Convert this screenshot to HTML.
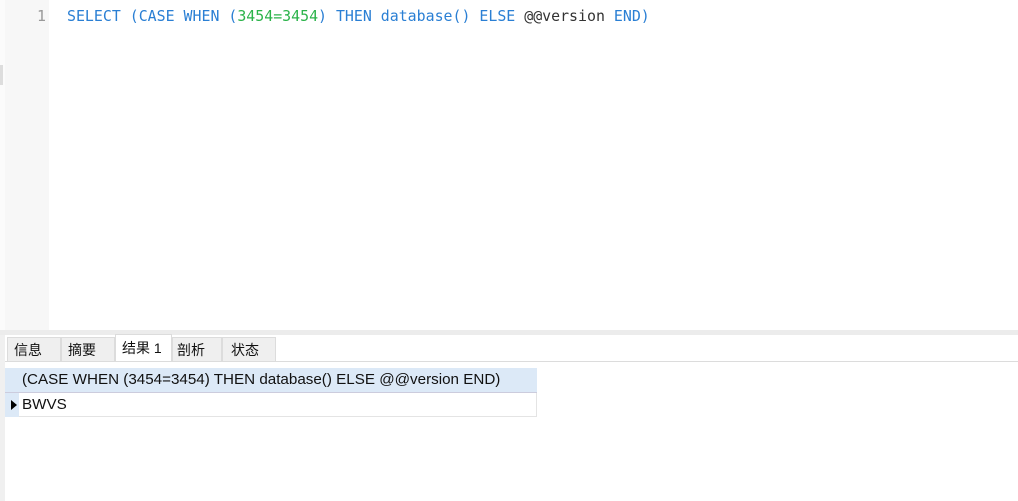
<!DOCTYPE html>
<html><head><meta charset="utf-8"><style>
body{margin:0;width:1018px;height:501px;background:#fff;position:relative;overflow:hidden;font-family:"Liberation Sans","Noto Sans CJK SC",sans-serif}
.a{position:absolute}
.code{font-family:"DejaVu Sans Mono","Liberation Mono",monospace;font-size:14.9px;color:#2a7fd4;white-space:pre}
.tab{position:absolute;top:337px;height:24px;background:#efefef;border:1px solid #dcdcdc;border-bottom:none;font-size:14px;line-height:24px;color:#111;box-sizing:border-box;padding-left:6px}
</style></head><body>
<div class="a" style="left:0;top:0;width:5px;height:330px;background:#fbfbfb"></div>
<div class="a" style="left:0;top:65px;width:3px;height:20px;background:#ddd"></div>
<div class="a" style="left:5px;top:0;width:44px;height:330px;background:#f7f7f7"></div>
<div class="a code" style="left:37px;top:7px;color:#999">1</div>
<div class="a code" style="left:67px;top:7px">SELECT (CASE WHEN (<span style="color:#2bb34a">3454=3454</span>) THEN database() ELSE <span style="color:#333">@@version</span> END)</div>
<div class="a" style="left:0;top:330px;width:1018px;height:5px;background:#ececec"></div>
<div class="a" style="left:0;top:335px;width:5px;height:166px;background:#f0f0f0"></div>
<div class="tab" style="left:7px;width:54px">信息</div>
<div class="tab" style="left:61px;width:54px">摘要</div>
<div class="tab" style="left:115px;top:334px;height:28px;width:57px;background:#fff;line-height:26px">结果 1</div>
<div class="tab" style="left:172px;width:50px;padding-left:4px">剖析</div>
<div class="tab" style="left:222px;width:54px;padding-left:8px">状态</div>
<div class="a" style="left:5px;top:361px;width:1013px;height:1px;background:#dcdcdc"></div>
<div class="a" style="left:5px;top:368px;width:532px;height:25px;background:#dce9f7;border-bottom:1px solid #ccd;box-sizing:border-box"></div>
<div class="a" style="left:22px;top:371px;font-size:15.2px;color:#111">(CASE WHEN (3454=3454) THEN database() ELSE @@version END)</div>
<div class="a" style="left:5px;top:393px;width:14px;height:24px;background:#dce9f7"></div>
<div class="a" style="left:19px;top:393px;width:518px;height:24px;border-bottom:1px solid #e4e4e4;border-right:1px solid #e4e4e4;box-sizing:border-box"></div>
<div class="a" style="left:11px;top:400px;width:0;height:0;border-left:6px solid #000;border-top:5px solid transparent;border-bottom:5px solid transparent"></div>
<div class="a" style="left:22px;top:396px;font-size:15.2px;color:#111">BWVS</div>
</body></html>
